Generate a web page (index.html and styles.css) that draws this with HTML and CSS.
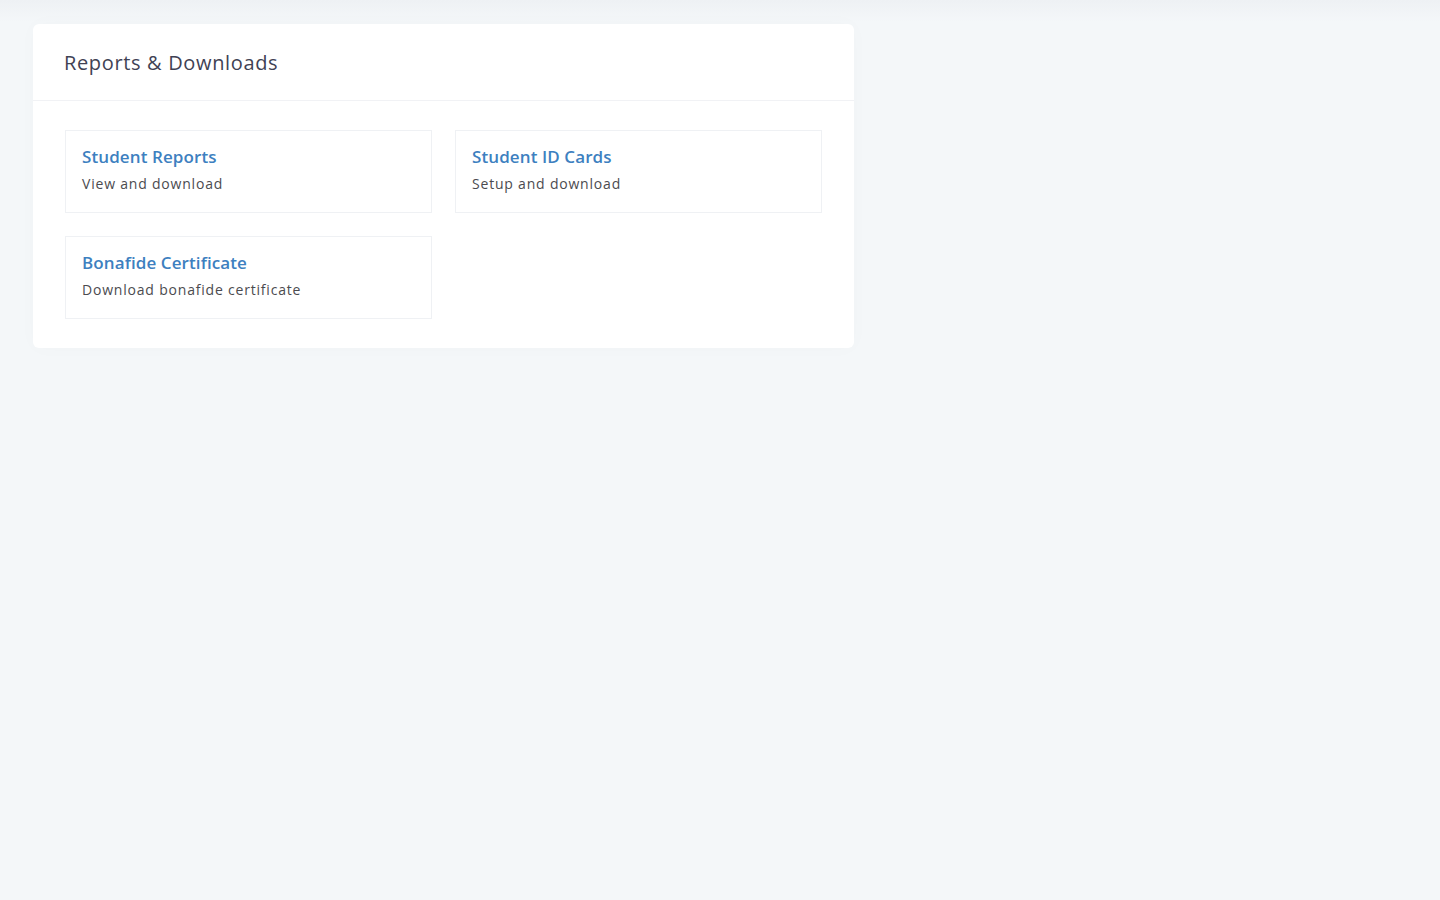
FILE: index.html
```html
<!DOCTYPE html>
<html lang="en">
<head>
    <meta charset="UTF-8">
    <meta name="viewport" content="width=device-width, initial-scale=1.0">
    <title>Reports &amp; Downloads</title>
    <link rel="stylesheet" href="styles.css">
</head>
<body>

<div class="page">
    <div class="card">
        <div class="card-header">
            <h3 class="card-title">Reports &amp; Downloads</h3>
        </div>
        <div class="card-body">
            <!-- liens de rapports -->
            <a class="report-item" href="#">
                <div class="report-title">Student Reports</div>
                <div class="report-desc">View and download</div>
            </a>
            <a class="report-item" href="#">
                <div class="report-title">Student ID Cards</div>
                <div class="report-desc">Setup and download</div>
            </a>
            <a class="report-item" href="#">
                <div class="report-title">Bonafide Certificate</div>
                <div class="report-desc">Download bonafide certificate</div>
            </a>
        </div>
    </div>
</div>

</body>
</html>
```

FILE: styles.css
```css
html, body { margin: 0; height: 100%; }
body { font-family: "Open Sans", "Noto Sans", sans-serif; background: linear-gradient(#eef1f4 0, #f4f7f9 22px); }
.page { padding: 24px 33px; }
.card { width: 821px; background: #fff; border-radius: 6px; box-shadow: 0 0 20px rgba(76, 87, 125, 0.02); }
.card-header { height: 76px; padding: 0 31px; display: flex; align-items: center; border-bottom: 1px solid #f1f2f5; }
.card-title { margin: 0; font-size: 20px; font-weight: 500; color: #3f4254; letter-spacing: 0.65px; }
.card-body { padding: 29px 32px 29px; display: grid; grid-template-columns: 367px 367px; column-gap: 23px; row-gap: 23px; }
.report-item { display: block; height: 83px; box-sizing: border-box; padding: 14px 16px; border: 1px solid #eff1f4; text-decoration: none; }
.report-title { font-size: 17px; font-weight: 600; color: #3d80c0; line-height: 24px; letter-spacing: 0.1px; }
.report-desc { margin-top: 5px; font-size: 14px; color: #4b4b4f; line-height: 20px; letter-spacing: 0.8px; }
```
